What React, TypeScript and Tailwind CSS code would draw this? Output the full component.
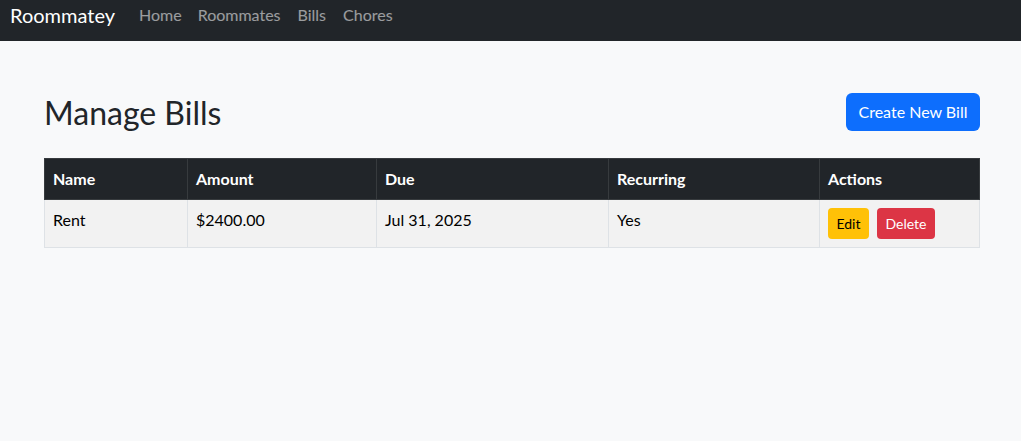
const font = { fontFamily: '"Lato", "Noto Sans", sans-serif' };

const bills = [
  { name: "Rent", amount: "$2400.00", due: "Jul 31, 2025", recurring: "Yes" },
];

function Navbar() {
  return (
    <nav className="h-[41px] bg-[#212529]">
      <div className="flex h-[30px] items-center px-[10px]">
        <a href="#" className="mr-[16px] text-[20px] leading-[30px] text-white">
          Roommatey
        </a>
        <ul className="flex items-center text-[16px] leading-[24px] text-white/55">
          <li>
            <a href="#" className="px-2">Home</a>
          </li>
          <li>
            <a href="#" className="px-2">Roommates</a>
          </li>
          <li>
            <a href="#" className="px-[9px]">Bills</a>
          </li>
          <li>
            <a href="#" className="px-2">Chores</a>
          </li>
        </ul>
      </div>
    </nav>
  );
}

export default function App() {
  return (
    <div className="min-h-[441px] bg-[#f8f9fa] text-[#212529]" style={font}>
      <Navbar />
      <main className="mt-12 ml-[44px] w-[936px]">
        <div className="mb-6 flex h-[45px] items-center justify-between">
          <h1 className="pt-[2px] text-[32px] leading-[45px] font-normal">Manage Bills</h1>
          <button className="h-[38px] w-[134px] rounded-[6px] bg-[#0d6efd] text-[16px] text-white">
            Create New Bill
          </button>
        </div>
        <table className="w-full border-collapse text-[16px] leading-[24px]">
          <thead>
            <tr className="bg-[#212529] text-left font-bold text-white">
              <th className="w-[143px] border border-[#373b3e] p-2">Name</th>
              <th className="w-[189px] border border-[#373b3e] p-2">Amount</th>
              <th className="w-[232px] border border-[#373b3e] p-2">Due</th>
              <th className="w-[211px] border border-[#373b3e] p-2">Recurring</th>
              <th className="border border-[#373b3e] p-2">Actions</th>
            </tr>
          </thead>
          <tbody>
            {bills.map((b) => (
              <tr key={b.name} className="bg-[#f2f2f2] align-top text-black">
                <td className="border border-[#dee2e6] p-2">{b.name}</td>
                <td className="border border-[#dee2e6] p-2">{b.amount}</td>
                <td className="border border-[#dee2e6] p-2">{b.due}</td>
                <td className="border border-[#dee2e6] p-2">{b.recurring}</td>
                <td className="border border-[#dee2e6] p-2">
                  <div className="flex gap-2">
                    <button className="h-[31px] w-[41px] rounded-[4px] bg-[#ffc107] text-[14px] text-black">
                      Edit
                    </button>
                    <button className="h-[31px] w-[58px] rounded-[4px] bg-[#dc3545] text-[14px] text-white">
                      Delete
                    </button>
                  </div>
                </td>
              </tr>
            ))}
          </tbody>
        </table>
      </main>
    </div>
  );
}
